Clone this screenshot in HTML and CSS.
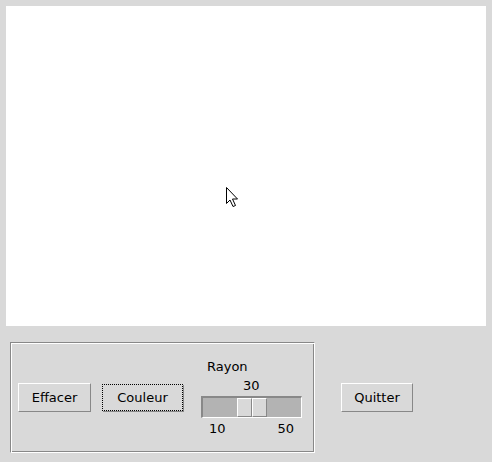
FILE: index.html
```html
<!DOCTYPE html>
<html>
<head>
<meta charset="utf-8">
<link rel="stylesheet" href="styles.css">
</head>
<body>
<div class="window">
  <div class="canvas">
    <svg class="cursor" width="14" height="22" viewBox="0 0 14 22">
      <path d="M1.5 1.5 L1.5 17.5 L5 14 L8 20.5 L10.5 19.5 L7.5 13 L12.5 13 Z" fill="#fff" stroke="#000" stroke-width="1" stroke-linejoin="miter"/>
    </svg>
  </div>
  <div class="controls">
    <div class="frame">
      <div class="btn effacer">Effacer</div>
      <div class="btn couleur">Couleur</div>
      <div class="scale">
        <div class="scale-label">Rayon</div>
        <div class="scale-value">30</div>
        <div class="trough">
          <div class="handle"><span class="half"></span><span class="half"></span></div>
        </div>
        <div class="scale-ticks"><span class="tick t10">10</span><span class="tick t50">50</span></div>
      </div>
    </div>
    <div class="btn quitter">Quitter</div>
  </div>
</div>
</body>
</html>
```
FILE: styles.css
```css
html, body {
  margin: 0;
  padding: 0;
  background: #d9d9d9;
}
body {
  width: 492px;
  height: 462px;
  overflow: hidden;
  font-family: "DejaVu Sans", sans-serif;
  font-size: 13px;
  color: #000;
}
.window {
  padding: 6px;
}
.canvas {
  position: relative;
  width: 480px;
  height: 320px;
  background: #fff;
}
.cursor {
  position: absolute;
  left: 219px;
  top: 180px;
}
.controls {
  display: flex;
  align-items: center;
  margin-top: 16px;
  margin-left: 4px;
}
.frame {
  box-sizing: border-box;
  width: 305px;
  height: 111px;
  border: 1px solid;
  border-color: #888 #fff #fff #888;
  box-shadow: inset 1px 1px 0 #fff, inset -1px -1px 0 #888;
  display: flex;
  align-items: center;
  padding-left: 7px;
}
.btn {
  box-sizing: border-box;
  height: 29px;
  line-height: 27px;
  text-align: center;
  border: 1px solid;
  border-color: #fff #888 #888 #fff;
}
.effacer {
  width: 73px;
}
.couleur {
  width: 81px;
  height: 27px;
  line-height: 25px;
  margin-left: 11px;
  border: 1px dotted #000;
  box-shadow: 1px 1px 0 #888;
  margin-top: -1px;
}
.quitter {
  width: 72px;
  margin-left: 26px;
}
.scale {
  width: 101px;
  margin-left: 18px;
  line-height: 15px;
}
.scale-label {
  padding-left: 6px;
}
.scale-value {
  margin-top: 4px;
  padding-left: 42px;
}
.trough {
  box-sizing: border-box;
  margin-top: 3px;
  width: 101px;
  height: 22px;
  background: #b3b3b3;
  border: 1px solid;
  border-color: #888 #fff #fff #888;
  border-top-width: 2px;
  border-left-width: 2px;
  padding-left: 34px;
}
.handle {
  display: flex;
  height: 19px;
}
.half {
  box-sizing: border-box;
  width: 15px;
  height: 19px;
  background: #d9d9d9;
  border: 1px solid;
  border-color: #fff #888 #888 #fff;
}
.scale-ticks {
  margin-top: 3px;
  display: flex;
}
.t10 {
  margin-left: 8px;
}
.t50 {
  margin-left: 52px;
}
```
